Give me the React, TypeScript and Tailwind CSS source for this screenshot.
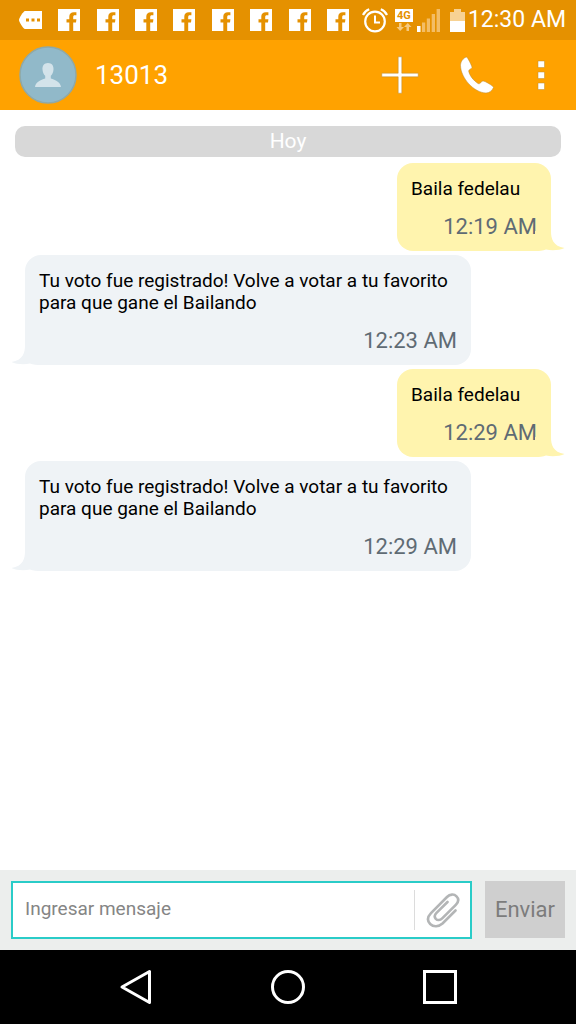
import React from 'react';

interface Message {
  id: number;
  text: string;
  time: string;
  sent: boolean;
}

const messages: Message[] = [
  { id: 1, text: 'Baila fedelau', time: '12:19 AM', sent: true },
  {
    id: 2,
    text: 'Tu voto fue registrado! Volve a votar a tu favorito para que gane el Bailando',
    time: '12:23 AM',
    sent: false,
  },
  { id: 3, text: 'Baila fedelau', time: '12:29 AM', sent: true },
  {
    id: 4,
    text: 'Tu voto fue registrado! Volve a votar a tu favorito para que gane el Bailando',
    time: '12:29 AM',
    sent: false,
  },
];

const FacebookIcon: React.FC = () => (
  <svg width="22" height="22" viewBox="0 0 22 22" aria-hidden="true">
    <path
      fill="#fff"
      d="M0 0H22V22H15.2V13.4H18L18.400 10.300H15.200V8C15.200 6.800 15.700 6.300 16.800 6.300H18.400V3.200H16C12.800 3.200 11.300 5 11.300 7.600V10.300H8.500V13.400H11.300V22H0Z"
    />
  </svg>
);

const StatusBar: React.FC = () => (
  <div className="flex h-10 items-center bg-[#e59100] pl-[19px] pr-[10px] text-white">
    <div className="mr-[13px] flex flex-1 items-center justify-between">
      <svg width="23" height="18" viewBox="0 0 23 18" aria-hidden="true">
        <path fill="#fff" d="M6 0H23V18H6C4.500 18 0 11 0 9S4.500 0 6 0Z" />
        <path fill="#e59100" d="M7 7.500h3v3H7zM12.500 7.500h3v3h-3zM18 7.500h3v3h-3z" />
      </svg>
      {[1, 2, 3, 4, 5, 6, 7, 8].map((n) => (
        <FacebookIcon key={n} />
      ))}
    </div>
    <svg width="26" height="25" viewBox="0 0 26 25" fill="none" stroke="#fff" aria-hidden="true">
      <circle cx="13" cy="13.500" r="9.800" strokeWidth="2.200" />
      <path strokeWidth="2" d="M13 7.500V14.500H18" />
      <path strokeWidth="2.200" d="M1 7C2.200 4.200 4.300 2.300 7.200 1.200M18.800 1.200C21.700 2.300 23.800 4.200 25 7" />
    </svg>
    <div className="ml-[7px] flex w-[18px] flex-col items-center">
      <span className="flex h-[13px] w-full items-center justify-center bg-white text-[11px] font-bold leading-[13px] text-[#e59100]">
        4G
      </span>
      <svg width="16" height="9" viewBox="0 0 16 9" aria-hidden="true">
        <path
          fill="#f5c97f"
          d="M3 1H5.500V5H8L4.200 9L0.500 5H3ZM10.500 9H13V5H15.500L11.800 1L8 5H10.500Z"
        />
      </svg>
    </div>
    <svg className="ml-1" width="23" height="23" viewBox="0 0 23 23" aria-hidden="true">
      <path fill="#fff" d="M0 17h3.500v6H0z" />
      <path fill="#f3bd66" d="M5 13.500h3.200V23H5zM9.800 9.500H13V23H9.800zM14.700 5H18v18h-3.300zM19.600 0H23v23h-3.400z" />
    </svg>
    <svg className="ml-[10px] mr-[3px]" width="15" height="23" viewBox="0 0 15 23" aria-hidden="true">
      <path fill="#f7d293" d="M4 0h7v3h4v9H0V3h4z" />
      <path fill="#fff" d="M0 12h15v11H0z" />
    </svg>
    <span className="text-[23px] leading-[26px]">12:30 AM</span>
  </div>
);

const Header: React.FC = () => (
  <header className="flex h-[70px] items-center bg-[#ffa200] pl-[19px] pr-[30px] text-white">
    <svg width="58" height="58" viewBox="0 0 58 58" aria-hidden="true">
      <circle cx="29" cy="29" r="28" fill="#91b9c9" stroke="#8fa9a8" strokeWidth="1.500" />
      <path
        fill="#d3e3ea"
        d="M29 17c3.800 0 5.800 2.800 5.500 6.500-.2 3-1.300 5-2.700 6.300v2.700c4.500 1.500 9.700 3.500 10.200 8.500H16c.5-5 5.700-7 10.200-8.500v-2.700c-1.400-1.300-2.500-3.300-2.700-6.300C23.200 19.800 25.200 17 29 17Z"
      />
    </svg>
    <h1 className="ml-[18px] flex-1 text-[26px] leading-8">13013</h1>
    <button type="button" aria-label="Agregar">
      <svg width="38" height="38" viewBox="0 0 38 38" aria-hidden="true">
        <path fill="#fff" stroke="#b98a35" strokeWidth=".5" d="M17.200 .8h3.600v16.400h16.400v3.600H20.800v16.400h-3.600V20.800H.8v-3.600h16.400z" />
      </svg>
    </button>
    <button type="button" aria-label="Llamar" className="ml-10">
      <svg width="36" height="38" viewBox="0 0 36 38" aria-hidden="true">
        <path
          fill="#fff"
          stroke="#b98a35"
          strokeWidth=".5"
          d="M7.500 1C8.500 1 13 10 13 11.500C12.500 13 9.500 13.500 9.700 15.200C10.500 19.500 14.500 24.500 19 27.500C21.500 28.800 22 25 24 25C26 25 34.500 30 34.500 31.500C33 34.500 30.500 37 27 37C15 36.500 2 22.500 1.500 9.500C1.500 6 4 2 7.500 1Z"
        />
      </svg>
    </button>
    <button type="button" aria-label="Más opciones" className="ml-[41px]">
      <svg width="10" height="30" viewBox="0 0 10 30" aria-hidden="true">
        <path fill="#fff" stroke="#b98a35" strokeWidth=".5" d="M2 1h6.500v6.500H2zM2 12h6.500v6.500H2zM2 23h6.500v6.500H2z" />
      </svg>
    </button>
  </header>
);

const MessageBubble: React.FC<{ message: Message }> = ({ message }) => {
  const { text, time, sent } = message;

  return (
    <li
      className={`relative min-w-[154px] max-w-[446px] rounded-2xl px-[14px] pb-[11px] pt-[15px] ${
        sent ? 'mr-[25px] self-end bg-[#fff4ae]' : 'ml-[25px] self-start bg-[#eff3f6]'
      }`}
    >
      <p className="text-[19px] leading-[22px] text-black">{text}</p>
      <time className="mt-[14px] block text-right text-[22px] leading-[26px] text-[#5f6b74]">{time}</time>
      <svg
        className={`absolute bottom-0 ${sent ? '-right-[14px]' : '-left-[14px] -scale-x-100'}`}
        width="34"
        height="20"
        viewBox="0 0 34 20"
        aria-hidden="true"
      >
        <path
          fill={sent ? '#fff4ae' : '#eff3f6'}
          d="M20 0C20 8 22 15 33.500 17C29 19.200 21 20 15 18.500C12 19.600 8 20 4 20V0Z"
        />
      </svg>
    </li>
  );
};

const Composer: React.FC = () => (
  <form
    className="flex h-20 items-start bg-[#eceeed] px-[11px] pt-[11px]"
    onSubmit={(e) => e.preventDefault()}
  >
    <div className="flex h-[58px] flex-1 items-center border-2 border-[#2accc8] bg-white">
      <input
        type="text"
        aria-label="Ingresar mensaje"
        placeholder="Ingresar mensaje"
        className="h-full min-w-0 flex-1 bg-transparent pb-1 pl-3 text-[19px] leading-6 text-black outline-none placeholder:text-[#858585]"
      />
      <button
        type="button"
        aria-label="Adjuntar"
        className="flex h-10 w-14 items-center justify-center border-l border-[#dcdcdc]"
      >
        <svg width="34" height="36" viewBox="0 0 34 36" fill="none" stroke="#b3b5b6" strokeWidth="2.600" strokeLinecap="round" aria-hidden="true">
          <path d="M29.500 18.500L16.500 31.500C12.500 35 7.500 35.200 4.200 32C1 28.700 1.500 24.800 5 21.200L21 5C24 2 28 1.800 30.500 4.300C33 6.800 32.500 10 29.800 12.800L16.200 26.300C14 28.500 11.500 28.600 9.800 26.800C8.200 25 8.500 22.800 10.500 20.800L21.500 10" />
        </svg>
      </button>
    </div>
    <button type="submit" className="ml-[13px] h-[57px] w-20 bg-[#cfcfcf] text-[22px] leading-[26px] text-[#7c7c7c]">
      Enviar
    </button>
  </form>
);

const NavigationBar: React.FC = () => (
  <nav className="flex h-[74px] items-center justify-center gap-[118px] bg-black">
    <button type="button" aria-label="Atrás">
      <svg width="34" height="36" viewBox="0 0 34 36" fill="none" stroke="#fff" strokeWidth="3" strokeLinejoin="round" aria-hidden="true">
        <path d="M30.500 2.500V33.500L3 18Z" />
      </svg>
    </button>
    <button type="button" aria-label="Inicio">
      <svg width="34" height="36" viewBox="0 0 34 36" fill="none" stroke="#fff" strokeWidth="3" aria-hidden="true">
        <circle cx="17" cy="18" r="15.500" />
      </svg>
    </button>
    <button type="button" aria-label="Recientes">
      <svg width="34" height="36" viewBox="0 0 34 36" fill="none" stroke="#fff" strokeWidth="3" aria-hidden="true">
        <path d="M1.500 2.500H32.500V33.500H1.500Z" />
      </svg>
    </button>
  </nav>
);

const App: React.FC = () => {
  return (
    <div className="flex min-h-screen flex-col bg-white font-[Roboto,sans-serif]">
      <StatusBar />
      <Header />
      <main className="flex-1 pb-4 pt-4">
        <h2 className="mx-[15px] rounded-[10px] bg-[#d8d8d8] text-center text-[21px] leading-[31px] text-white">
          Hoy
        </h2>
        <ul className="mt-1.5 flex flex-col gap-1">
          {messages.map((message) => (
            <MessageBubble key={message.id} message={message} />
          ))}
        </ul>
      </main>
      <Composer />
      <NavigationBar />
    </div>
  );
};

export default App;
